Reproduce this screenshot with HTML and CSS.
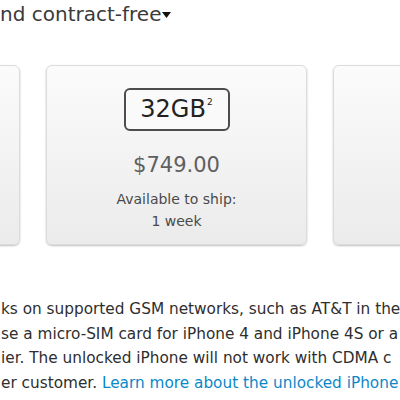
FILE: index.html
```html
<!DOCTYPE html>
<html lang="en">
<head>
    <meta charset="UTF-8">
    <title>Buy iPhone</title>
    <link rel="stylesheet" href="styles.css">
</head>
<body>

    <div class="page">
        <h2 class="choice">nd contract-free<svg class="caret" width="9" height="6" viewBox="0 0 9 6"><path d="M0 0h9L4.5 6z" fill="#111"/></svg></h2>

        <div class="cards">
            <div class="card"></div>
            <div class="card">
                <div class="capacity">32GB<sup>2</sup></div>
                <div class="price">$749.00</div>
                <div class="ship">Available to ship:<br>1 week</div>
            </div>
            <div class="card"></div>
        </div>

        <p class="note">
            <span>ks on supported GSM networks, such as AT&amp;T in the</span>
            <span>se a micro-SIM card for iPhone 4 and iPhone 4S or a</span>
            <span>ier. The unlocked iPhone will not work with CDMA c</span>
            <span>er customer. <a href="#">Learn more about the unlocked iPhone</a></span>
        </p>
    </div>

</body>
</html>
```

FILE: styles.css
```css
body {
    margin: 0;
    padding: 0;
    background: #fff;
    font-family: "DejaVu Sans", Arial, sans-serif;
    color: #333;
    overflow: hidden;
}

.page {
    width: 400px;
    height: 400px;
    overflow: hidden;
}

.choice {
    margin: 0;
    padding: 2px 0 0 0;
    font-size: 20px;
    font-weight: normal;
    line-height: 24px;
    color: #3a3a3a;
    white-space: nowrap;
}

.caret {
    margin-left: 1px;
    vertical-align: 3px;
}

.cards {
    display: flex;
    gap: 26px;
    margin: 39px 0 0 -241px;
}

.card {
    flex: 0 0 261px;
    height: 180px;
    box-sizing: border-box;
    border: 1px solid #dcdcdc;
    border-radius: 6px;
    background: linear-gradient(#fbfbfb, #ebebeb);
    box-shadow: 0 1px 2px rgba(0, 0, 0, 0.25);
    display: flex;
    flex-direction: column;
    align-items: center;
    padding-top: 22px;
}

.capacity {
    width: 106px;
    height: 43px;
    box-sizing: border-box;
    border: 2px solid #4d4d4d;
    border-radius: 6px;
    background: #fafafa;
    color: #222;
    font-size: 24px;
    line-height: 39px;
    text-align: center;
}

.capacity sup {
    font-size: 9px;
    vertical-align: 12px;
    line-height: 0;
    margin-left: 1px;
}

.price {
    margin-top: 20px;
    font-size: 21px;
    line-height: 28px;
    color: #5f5f5f;
}

.ship {
    margin-top: 9px;
    font-size: 14px;
    line-height: 22px;
    color: #4a4a4a;
    text-align: center;
}

.note {
    margin: 52px 0 0 0;
    padding-left: 1px;
    font-size: 15.3px;
    line-height: 24.7px;
    color: #2e2e2e;
    white-space: nowrap;
}

.note span {
    display: block;
}

.note a {
    color: #0a88c8;
    text-decoration: none;
}
```
